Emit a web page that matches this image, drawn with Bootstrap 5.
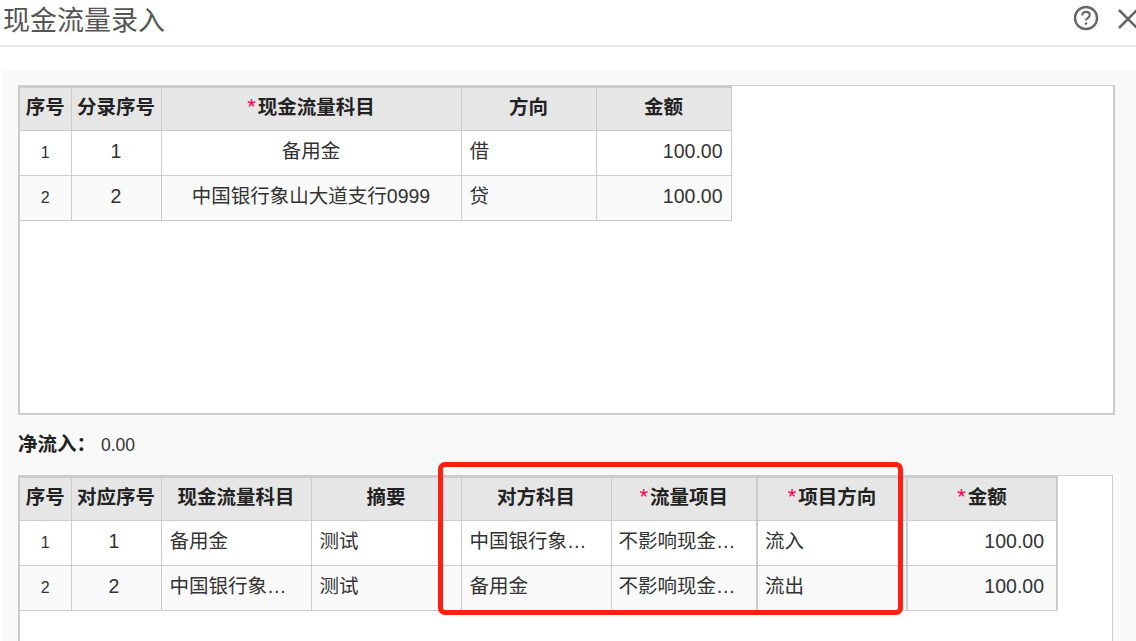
<!DOCTYPE html>
<html lang="zh-CN">
<head>
<meta charset="utf-8">
<title>现金流量录入</title>
<link href="https://cdn.jsdelivr.net/npm/bootstrap@5.3.0/dist/css/bootstrap.min.css" rel="stylesheet">
<style>
html,body{height:641px;overflow:hidden;margin:0;background:#fff;}
body{font-family:"Liberation Sans","Noto Sans CJK SC",sans-serif;color:#333;position:relative;}
.dlg-head{height:47px;border-bottom:2px solid #e8e8e8;padding-left:3px;overflow:hidden;}
.dlg-title{font-size:27px;line-height:42px;color:#555;font-weight:400;margin:0;}
.dlg-tools{flex:none;width:66px;margin-right:-3px;}
.help-icon{margin-top:5px;}
.dlg-body{margin:23px 0 0 3px;background:#f9f9f9;padding:15px 21px 0 15px;height:571px;overflow:hidden;}
.grid-box{background:#fff;border:2px solid #ccc;border-top-width:1px;}
.box-top{height:330px;}
.box-bottom{height:166px;margin-right:2px;border-width:1px 1px 0 2px;}
.net-line{height:60px;padding-top:16px;font-size:17.5px;line-height:26px;}
.net-line b{font-size:19.5px;color:#222;margin-right:5px;}
.flow-table{table-layout:fixed;border-collapse:collapse;margin:0;width:auto;}
.flow-table th,.flow-table td{border:1px solid #ccc;padding:0 8px 4px;font-size:19.5px;font-weight:400;color:#333;height:45px;line-height:24px;white-space:nowrap;overflow:hidden;text-overflow:ellipsis;background:#fff;}
.flow-table tr>:first-child{border-left:0;}
.flow-table thead tr>*{border-top:2px solid #ccc;}
.flow-table th{background:#e6e6e6;color:#222;font-weight:700;text-align:center;height:43px;padding:0 2px 3px;}
.flow-table tbody tr:nth-child(2) td{background:#fafafa;}
.flow-table td.seq{font-size:16px;text-align:center;padding:0;}
.flow-table td.mid{text-align:center;}
.flow-table td.amt{text-align:right;padding-right:8px;}
.req{color:#f5004f;font-weight:400;margin-right:2px;font-size:22px;line-height:0;}
.wide-top{width:711px;}
.wide-bottom{width:1037px;}
.wide-bottom td.mid{padding-right:12px;}
.wide-bottom td.amt{padding-right:12px;}
.wide-bottom td:nth-child(6),.wide-bottom td:nth-child(7){padding-left:7px;}
.wide-bottom tr>:nth-child(7),.wide-bottom tr>:nth-child(8){border-left-width:2px;}
.wide-bottom tr>:last-child{border-right-width:2px;}
.mark-frame{position:absolute;left:438px;top:462px;width:465px;height:153px;border:5px solid #ff2010;border-radius:7px;pointer-events:none;}
</style>
</head>
<body>
<header class="dlg-head d-flex justify-content-between align-items-start">
  <h1 class="dlg-title">现金流量录入</h1>
  <div class="dlg-tools d-flex align-items-start justify-content-between">
    <svg width="26" height="26" viewBox="0 0 26 26" fill="none" stroke="#666" stroke-width="2.4" aria-label="帮助" class="help-icon">
      <circle cx="13" cy="13" r="11"/>
      <path d="M9.2 10.4c0-2.3 1.7-3.5 3.8-3.5s3.8 1.2 3.8 3.2c0 2.8-3.8 2.8-3.8 5.4" stroke-width="2.1"/>
      <circle cx="13" cy="18.6" r="1.3" fill="#666" stroke="none"/>
    </svg>
    <svg width="22" height="22" viewBox="0 0 22 22" fill="none" stroke="#666" stroke-width="2.6" aria-label="关闭" class="mt-2">
      <path d="M2 2l18 18M20 2L2 20"/>
    </svg>
  </div>
</header>
<main class="dlg-body">
  <section class="grid-box box-top">
    <table class="flow-table wide-top">
      <colgroup><col style="width:51px"><col style="width:90px"><col style="width:300px"><col style="width:135px"><col style="width:135px"></colgroup>
      <thead><tr><th>序号</th><th>分录序号</th><th><span class="req">*</span>现金流量科目</th><th>方向</th><th>金额</th></tr></thead>
      <tbody>
        <tr><td class="seq">1</td><td class="mid">1</td><td class="mid">备用金</td><td>借</td><td class="amt">100.00</td></tr>
        <tr><td class="seq">2</td><td class="mid">2</td><td class="mid">中国银行象山大道支行0999</td><td>贷</td><td class="amt">100.00</td></tr>
      </tbody>
    </table>
  </section>
  <div class="net-line"><b>净流入：</b>0.00</div>
  <section class="grid-box box-bottom">
    <table class="flow-table wide-bottom">
      <colgroup><col style="width:51px"><col style="width:90px"><col style="width:150px"><col style="width:150px"><col style="width:150px"><col style="width:146px"><col style="width:150px"><col style="width:150px"></colgroup>
      <thead><tr><th>序号</th><th>对应序号</th><th>现金流量科目</th><th>摘要</th><th>对方科目</th><th><span class="req">*</span>流量项目</th><th><span class="req">*</span>项目方向</th><th><span class="req">*</span>金额</th></tr></thead>
      <tbody>
        <tr><td class="seq">1</td><td class="mid">1</td><td>备用金</td><td>测试</td><td>中国银行象山大道支行0999</td><td>不影响现金流量项目</td><td>流入</td><td class="amt">100.00</td></tr>
        <tr><td class="seq">2</td><td class="mid">2</td><td>中国银行象山大道支行0999</td><td>测试</td><td>备用金</td><td>不影响现金流量项目</td><td>流出</td><td class="amt">100.00</td></tr>
      </tbody>
    </table>
  </section>
</main>
<div class="mark-frame"></div>
</body>
</html>
